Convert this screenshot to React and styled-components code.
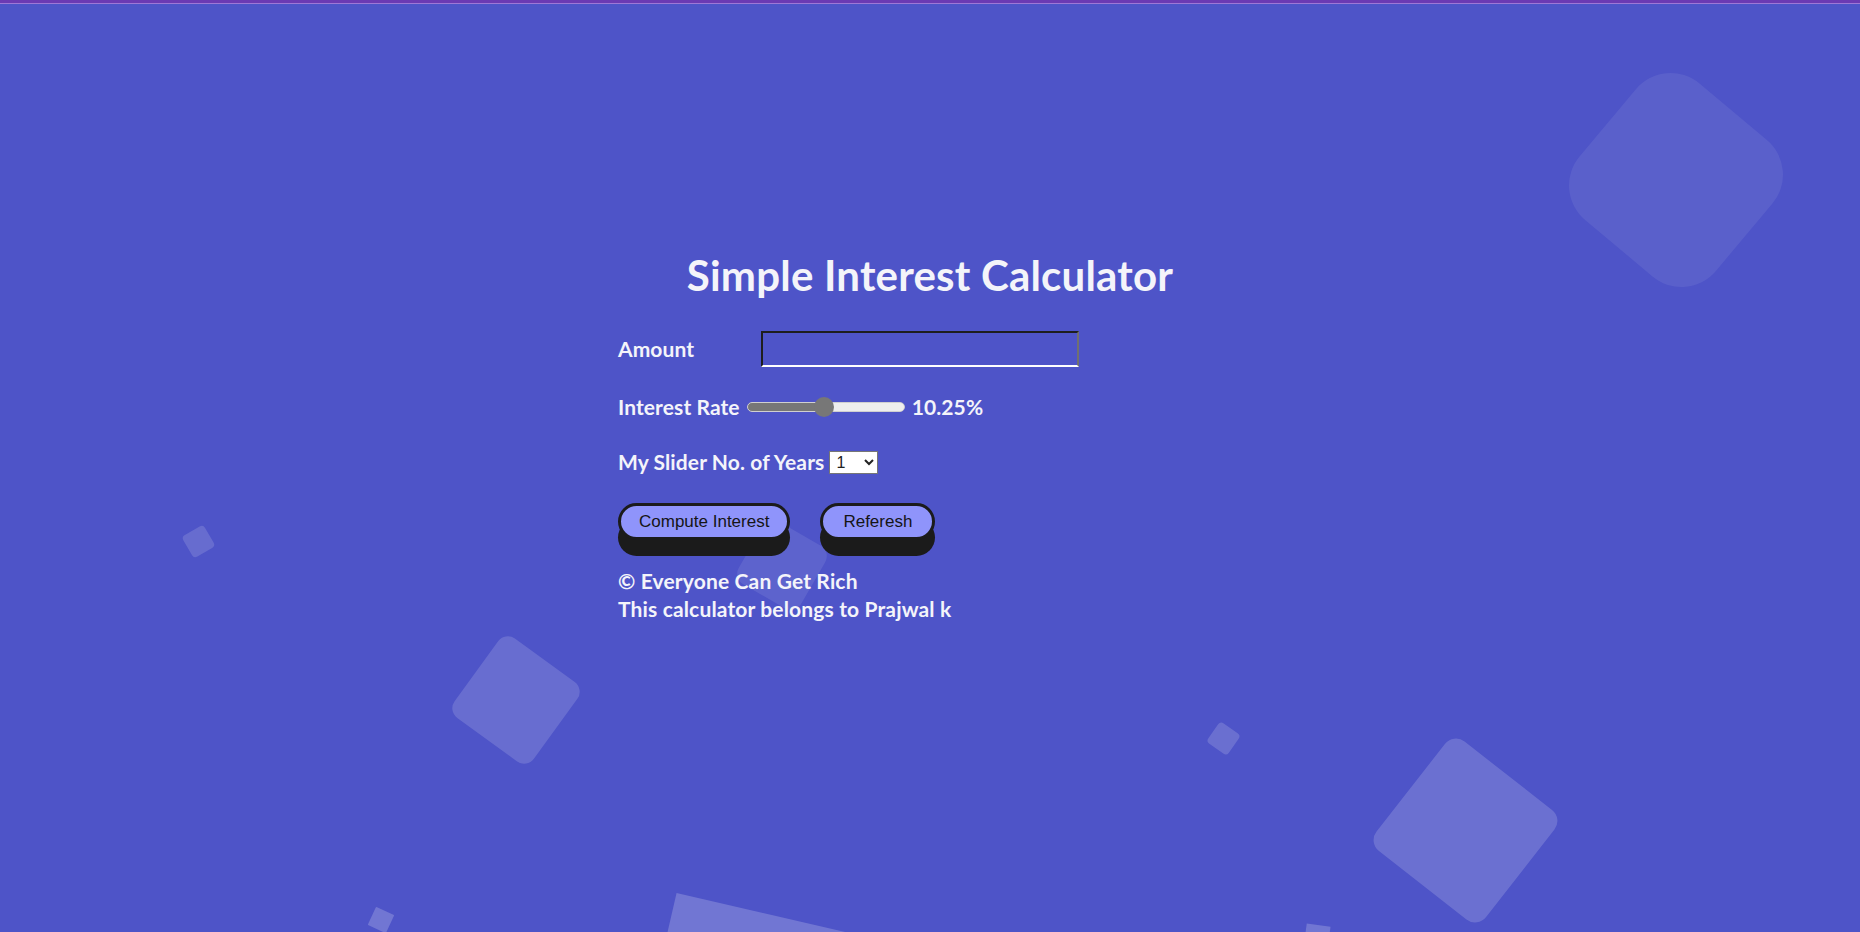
import React, { useState } from 'react';
import styled, { createGlobalStyle } from 'styled-components';

const GlobalStyle = createGlobalStyle`
  html, body {
    margin: 0;
    padding: 0;
    background: #4e54c8;
  }
  * {
    box-sizing: border-box;
  }
`;

const Page = styled.div`
  position: relative;
  height: 932px;
  overflow: hidden;
  background: #4e54c8;
  font-family: 'Lato', 'Noto Sans', sans-serif;
  color: #f4f4fa;
`;

const TopLine = styled.div`
  height: 4px;
  background: #6b3ab3;
  border-bottom: 1px solid #9d78d6;
`;

const Square = styled.span`
  position: absolute;
  display: block;
  width: ${p => p.size}px;
  height: ${p => p.size}px;
  left: ${p => p.x - p.size / 2}px;
  top: ${p => p.y - p.size / 2}px;
  border-radius: ${p => p.radius}px;
  background: rgba(255, 255, 255, ${p => p.alpha});
  transform: rotate(${p => p.rot}deg);
`;

const Container = styled.main`
  position: relative;
  z-index: 1;
  width: 624px;
  margin: 0 auto;
  padding-top: 246px;
  display: flex;
  flex-direction: column;
`;

const Title = styled.h1`
  margin: 0 0 31px;
  text-align: center;
  font-size: 42px;
  line-height: 50px;
  font-weight: 700;
  letter-spacing: 0.2px;
`;

const Row = styled.div`
  display: flex;
  align-items: center;
  gap: ${p => p.gap || 7}px;
  margin-bottom: ${p => p.mb}px;
`;

const Label = styled.label`
  font-size: 21px;
  line-height: 24px;
  font-weight: 700;
  letter-spacing: 0.1px;
  width: ${p => (p.width ? `${p.width}px` : 'auto')};
  flex-shrink: 0;
`;

const AmountInput = styled.input`
  width: 318px;
  height: 36px;
  background: transparent;
  border-style: solid;
  border-width: 2px;
  border-color: #1e1e1e #707070 #ffffff #1e1e1e;
  color: #fff;
  font-size: 18px;
  padding: 0 6px;
  outline: none;
`;

const Slider = styled.input`
  -webkit-appearance: none;
  appearance: none;
  width: 158px;
  height: 10px;
  margin: 0;
  border-radius: 5px;
  border: 1px solid #d0d0d0;
  background: linear-gradient(
    to right,
    #777 0%,
    #777 ${p => p.fill}%,
    #eee ${p => p.fill}%,
    #eee 100%
  );
  outline: none;

  &::-webkit-slider-thumb {
    -webkit-appearance: none;
    width: 20px;
    height: 20px;
    border-radius: 50%;
    background: #777;
    border: none;
    cursor: pointer;
  }
`;

const Value = styled.span`
  font-size: 21px;
  line-height: 24px;
  font-weight: 700;
  letter-spacing: 0.1px;
`;

const Select = styled.select`
  width: 49px;
  height: 23px;
  font-family: 'Liberation Sans', Arial, sans-serif;
  font-size: 16px;
  background: #fff;
  color: #222;
  border: 1px solid #767676;
  border-radius: 0;
  padding: 0 2px;
`;

const Buttons = styled.div`
  display: flex;
  gap: 30px;
  margin-bottom: 27px;
`;

const Button = styled.button`
  height: 37px;
  padding: 0 ${p => p.pad || 18}px;
  border: 3px solid #1b1b1b;
  border-radius: 20px;
  background: #8f94fb;
  box-shadow: 0 16px 0 #1b1b1b;
  color: #151515;
  font-family: 'Liberation Sans', Arial, sans-serif;
  font-size: 17px;
  cursor: pointer;
`;

const Footer = styled.footer`
  font-size: 21px;
  line-height: 28px;
  font-weight: 700;
  letter-spacing: 0.15px;
`;

const shapes = [
  { x: 1676, y: 180, size: 178, radius: 45, rot: 40, alpha: 0.07 },
  { x: 198, y: 541, size: 25, radius: 4, rot: -30, alpha: 0.14 },
  { x: 516, y: 700, size: 98, radius: 12, rot: 36, alpha: 0.15 },
  { x: 782, y: 565, size: 72, radius: 12, rot: 30, alpha: 0.09 },
  { x: 1223, y: 738, size: 25, radius: 4, rot: 35, alpha: 0.16 },
  { x: 1465, y: 830, size: 139, radius: 14, rot: 38, alpha: 0.17 },
  { x: 381, y: 920, size: 20, radius: 1, rot: 25, alpha: 0.2 },
  { x: 759, y: 1025, size: 220, radius: 0, rot: 13, alpha: 0.2 },
  { x: 1317, y: 937, size: 24, radius: 0, rot: 8, alpha: 0.2 },
];

export default function App() {
  const [rate, setRate] = useState(10.25);
  const [years, setYears] = useState('1');
  const fill = ((rate - 1) / 19) * 100;

  return (
    <Page>
      <GlobalStyle />
      <TopLine />
      {shapes.map((s, i) => (
        <Square key={i} {...s} />
      ))}
      <Container>
        <Title>Simple Interest Calculator</Title>

        <Row mb={28} gap={0}>
          <Label width={136} htmlFor="amount">Amount</Label>
          <AmountInput id="amount" type="number" />
        </Row>

        <Row mb={31}>
          <Label htmlFor="rate">Interest Rate</Label>
          <Slider
            id="rate"
            type="range"
            min="1"
            max="20"
            step="0.25"
            value={rate}
            fill={fill}
            onChange={e => setRate(parseFloat(e.target.value))}
          />
          <Value>{rate.toFixed(2)}%</Value>
        </Row>

        <Row mb={29} gap={5}>
          <Label htmlFor="years">My Slider No. of Years</Label>
          <Select id="years" value={years} onChange={e => setYears(e.target.value)}>
            {Array.from({ length: 10 }, (_, i) => (
              <option key={i} value={i + 1}>{i + 1}</option>
            ))}
          </Select>
        </Row>

        <Buttons>
          <Button>Compute Interest</Button>
          <Button pad={20}>Referesh</Button>
        </Buttons>

        <Footer>
          © Everyone Can Get Rich
          <br />
          This calculator belongs to Prajwal k
        </Footer>
      </Container>
    </Page>
  );
}
